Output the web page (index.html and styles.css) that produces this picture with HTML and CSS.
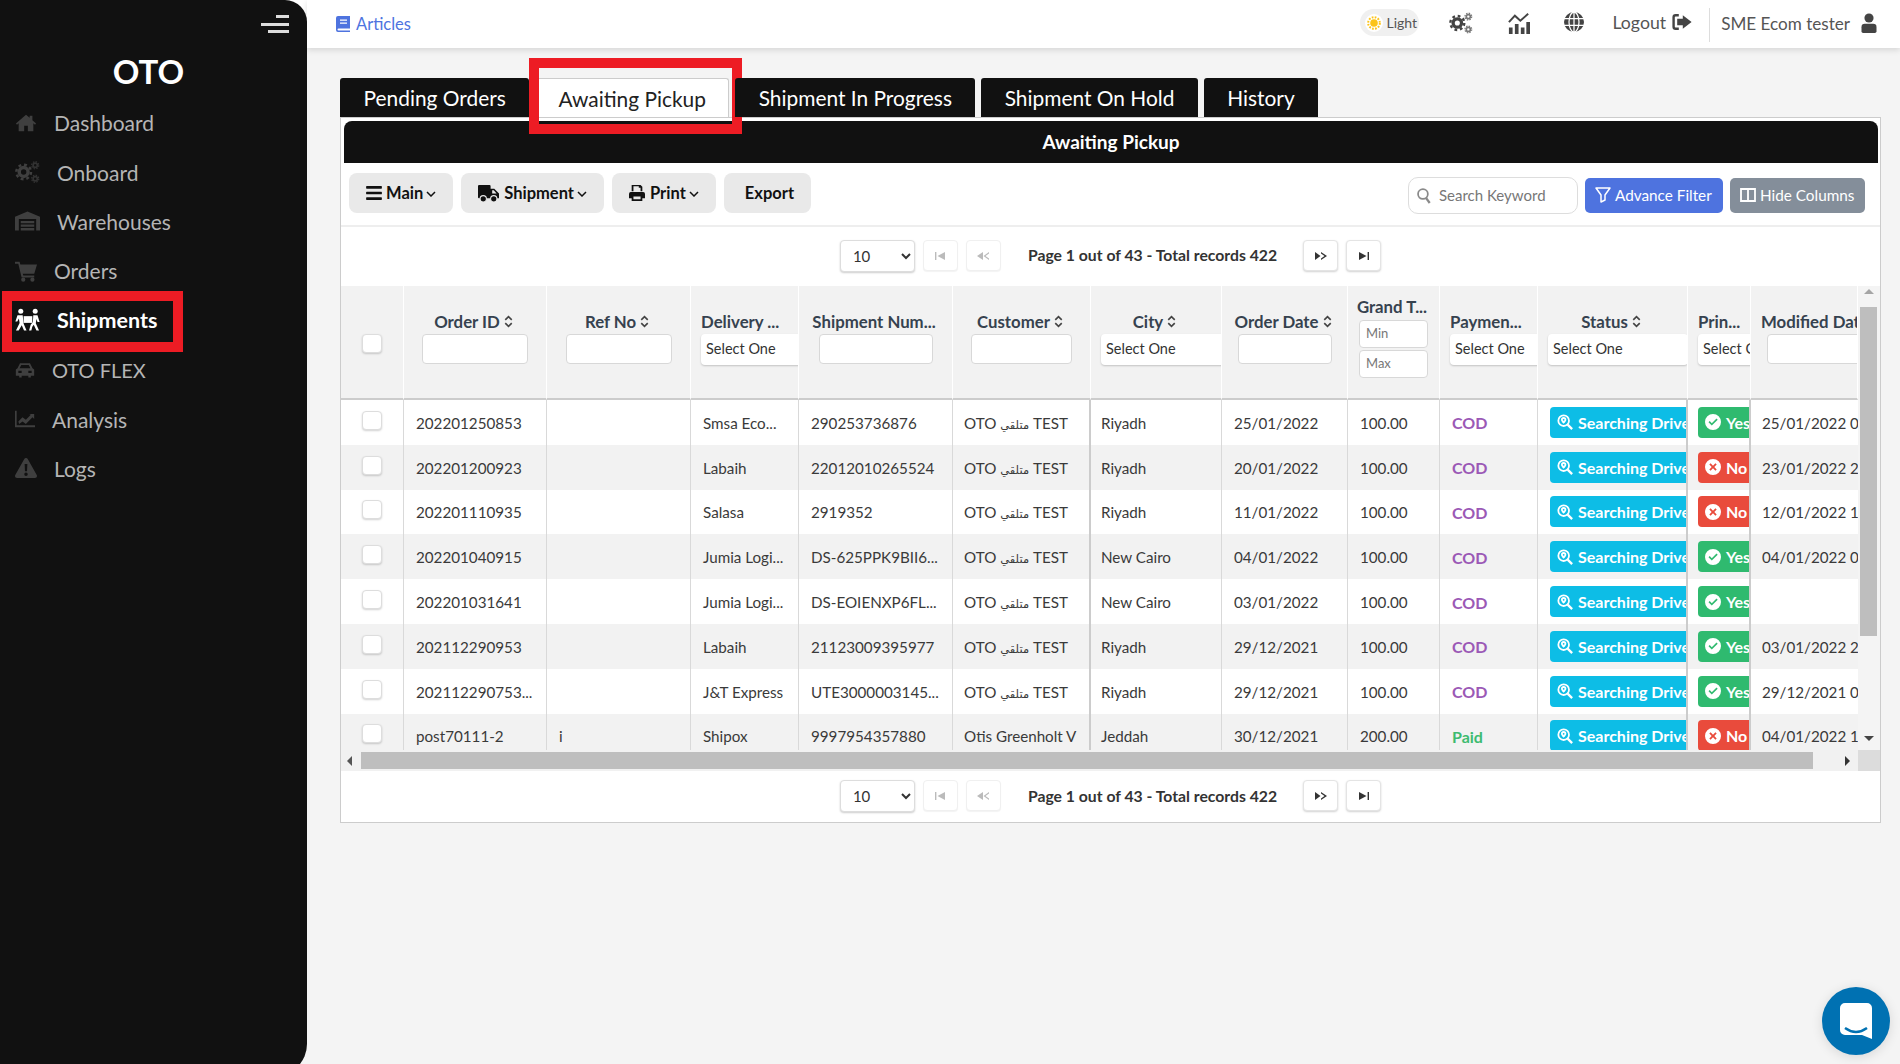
FILE: index.html
```html
<!DOCTYPE html>
<html lang="en">
<head>
<meta charset="utf-8">
<title>Awaiting Pickup</title>
<link rel="stylesheet" href="styles.css">
</head>
<body>
<svg class="defs" aria-hidden="true">
  <symbol id="i-home" viewBox="0 0 24 24"><path d="M12 3 1 12.5l1.2 1.4L4 12.4V21h6v-6h4v6h6v-8.6l1.8 1.5 1.2-1.4L19 9V4h-3v2.4z"/></symbol>
  <symbol id="i-gears" viewBox="0 0 26 24"><circle cx="9" cy="12" r="4.6" fill="none" stroke="currentColor" stroke-width="3.6"/><circle cx="9" cy="12" r="7.6" fill="none" stroke="currentColor" stroke-width="2.6" stroke-dasharray="3 3"/><g opacity=".72"><circle cx="21" cy="5" r="2.2" fill="none" stroke="currentColor" stroke-width="1.8"/><circle cx="21" cy="5" r="3.7" fill="none" stroke="currentColor" stroke-width="1.3" stroke-dasharray="1.6 1.3"/><circle cx="21" cy="19" r="2.2" fill="none" stroke="currentColor" stroke-width="1.8"/><circle cx="21" cy="19" r="3.7" fill="none" stroke="currentColor" stroke-width="1.3" stroke-dasharray="1.6 1.3"/></g></symbol>
  <symbol id="i-warehouse" viewBox="0 0 26 24"><path d="M0 7.5 13 2l13 5.5V22h-4V10H4v12H0z"/><path d="M6 12h14v2.4H6zM6 15.6h14V18H6zM6 19.2h14V22H6z"/></symbol>
  <symbol id="i-cart" viewBox="0 0 24 24"><path d="M0 2h5l.8 3H24l-3 10H8.5l.5 2h12v2.2H7.2L3.6 4.2H0z"/><circle cx="9" cy="21.5" r="2.3"/><circle cx="19" cy="21.5" r="2.3"/></symbol>
  <symbol id="i-people" viewBox="0 0 26 24"><circle cx="6" cy="3" r="2.6"/><circle cx="21" cy="3" r="2.6"/><path d="M9 8h9v7H9z"/><path d="M2.6 7h5.4l1 9 3 7h-2.6L7 17.5 3.8 23H1l3.8-8L4 10.4l-1.6 3.2H.4z"/><path d="M19 7h4.4l2.2 7h-2.2l-1-3-.8 4.4 3.4 7.6h-2.7L19.500 17l-1.500 2-1 4h-2.400l1.700-6 2.300-3z"/></symbol>
  <symbol id="i-car" viewBox="0 0 24 18"><path d="M6 1h12l3 6 2 1.500V16h-4v2h-3v-2H8v2H5v-2H1V8.500L3 7zm1.500 2L5.500 7h13l-2-4zM4 10v2.500h4V10zm12 0v2.500h4V10z" fill-rule="evenodd"/></symbol>
  <symbol id="i-area" viewBox="0 0 24 20"><path d="M0 0h2v17.500h22V20H0z"/><path d="m4 13 5-5 4 3 6-6-2-1h6v6l-2-2-8 8-4-3-4 3z"/></symbol>
  <symbol id="i-warn" viewBox="0 0 24 22"><path d="M12 0c.8 0 1.500.4 1.900 1.100l9.800 17.600c.8 1.500-.2 3.300-1.900 3.300H2.200C.5 22-.5 20.200.3 18.700L10.100 1.100C10.500.4 11.200 0 12 0zm-1.500 6.500.4 8h2.200l.4-8zM12 16a1.900 1.900 0 1 0 0 3.800 1.900 1.900 0 0 0 0-3.800z" fill-rule="evenodd"/></symbol>
  <symbol id="i-book" viewBox="0 0 14 16"><path d="M2 0h12v12.500H2.500a1 1 0 0 0 0 2H14V16H2a2 2 0 0 1-2-2V2a2 2 0 0 1 2-2zm2 3.500v1.300h7V3.500zm0 3v1.300h7V6.500z" fill-rule="evenodd"/></symbol>
  <symbol id="i-sun" viewBox="0 0 24 24"><circle cx="12" cy="12" r="6.500"/><circle cx="12" cy="12" r="10" fill="none" stroke="currentColor" stroke-width="3.400" stroke-dasharray="3 2.240"/></symbol>
  <symbol id="i-chart" viewBox="0 0 24 24"><path d="M1 17h4v7H1zM7.500 13h4v11h-4zM14 17h4v7h-4zM20 11h4v13h-4z"/><path d="m1 11 6.500-7 6 5.500L22 2" fill="none" stroke="currentColor" stroke-width="2.200"/></symbol>
  <symbol id="i-globe" viewBox="0 0 24 24"><circle cx="12" cy="12" r="12"/><g fill="none" stroke="#fff" stroke-width="1.500"><path d="M0 8h24M0 16h24M12 0v24"/><ellipse cx="12" cy="12" rx="6" ry="12"/></g></symbol>
  <symbol id="i-logout" viewBox="0 0 24 20"><path d="M8 0H4a4 4 0 0 0-4 4v12a4 4 0 0 0 4 4h4v-3H4a1 1 0 0 1-1-1V4a1 1 0 0 1 1-1h4z"/><path d="M13 1.500 24 10 13 18.500V14H6V6h7z"/></symbol>
  <symbol id="i-user" viewBox="0 0 18 24"><circle cx="9" cy="6" r="5.500"/><path d="M4 13h10a4 4 0 0 1 4 4v5a2 2 0 0 1-2 2H2a2 2 0 0 1-2-2v-5a4 4 0 0 1 4-4z"/></symbol>
  <symbol id="i-bars" viewBox="0 0 448 512"><path d="M16 132h416c8.837 0 16-7.163 16-16V76c0-8.837-7.163-16-16-16H16C7.163 60 0 67.163 0 76v40c0 8.837 7.163 16 16 16zm0 160h416c8.837 0 16-7.163 16-16v-40c0-8.837-7.163-16-16-16H16c-8.837 0-16 7.163-16 16v40c0 8.837 7.163 16 16 16zm0 160h416c8.837 0 16-7.163 16-16v-40c0-8.837-7.163-16-16-16H16c-8.837 0-16 7.163-16 16v40c0 8.837 7.163 16 16 16z"/></symbol>
  <symbol id="i-truck" viewBox="0 0 20 16"><path d="M0 1a1 1 0 0 1 1-1h10a1 1 0 0 1 1 1v2.500h3.500L20 8v4.500H1a1 1 0 0 1-1-1zm13.500 3.800V8h4.200l-2.700-3.200z" fill-rule="evenodd"/><circle cx="5" cy="13" r="3" stroke="#e9e9e9"/><circle cx="15" cy="13" r="3" stroke="#e9e9e9"/></symbol>
  <symbol id="i-print" viewBox="0 0 18 18"><path d="M3 0h10l2 2v5h-2V3h-2V1.500H5V7H3zM2 8h14a2 2 0 0 1 2 2v5h-3v3H3v-3H0v-5a2 2 0 0 1 2-2zm3 5v3h8v-3z" fill-rule="evenodd"/></symbol>
  <symbol id="i-chev" viewBox="0 0 10 6"><path d="m1 1 4 4 4-4" fill="none" stroke="currentColor" stroke-width="1.500"/></symbol>
  <symbol id="i-search" viewBox="0 0 16 18"><circle cx="6.800" cy="6.800" r="5.600" fill="none" stroke="currentColor" stroke-width="2"/><path d="m10.500 11.500 4 5.500" stroke="currentColor" stroke-width="2.600"/></symbol>
  <symbol id="i-filter" viewBox="0 0 16 16"><path d="M1 1h14L10 8v5l-4 2V8z" fill="none" stroke="currentColor" stroke-width="1.500" stroke-linejoin="round"/></symbol>
  <symbol id="i-columns" viewBox="0 0 16 16"><path d="M1 2h14v12H1zM8 2v12" fill="none" stroke="currentColor" stroke-width="1.800"/></symbol>
  <symbol id="i-sort" viewBox="0 0 8 12"><path d="m1 4.500 3-3 3 3M1 7.500l3 3 3-3" fill="none" stroke="currentColor" stroke-width="1.500"/></symbol>
  <symbol id="i-find" viewBox="0 0 18 18"><circle cx="7.500" cy="7.500" r="6" fill="none" stroke="currentColor" stroke-width="2"/><path d="m12 12 5 5" stroke="currentColor" stroke-width="2.600"/><path d="M7.500 3.500a3 3 0 0 1 3 3c0 2-3 4.500-3 4.500s-3-2.500-3-4.500a3 3 0 0 1 3-3zm0 2a1 1 0 1 0 0 2 1 1 0 0 0 0-2z" fill-rule="evenodd"/></symbol>
  <symbol id="i-yes" viewBox="0 0 16 16"><path d="M8 0a8 8 0 1 1 0 16A8 8 0 0 1 8 0zm3.500 4.500L6.800 9.200 4.700 7.100 3.500 8.300l3.300 3.300 5.900-5.900z" fill-rule="evenodd"/></symbol>
  <symbol id="i-no" viewBox="0 0 16 16"><path d="M8 0a8 8 0 1 1 0 16A8 8 0 0 1 8 0zM5.600 4.300 4.300 5.600 6.700 8l-2.400 2.400 1.300 1.300L8 9.300l2.400 2.400 1.300-1.300L9.300 8l2.400-2.400-1.300-1.300L8 6.700z" fill-rule="evenodd"/></symbol>
  <symbol id="i-first" viewBox="0 0 12 8"><path d="M1 0h1.400v8H1zM11 0v8L3.500 4z"/></symbol>
  <symbol id="i-prev" viewBox="0 0 12 8"><path d="M6 0v8L0 4zM12 0v1.500L8.500 4 12 6.500V8L6.500 4z"/></symbol>
  <symbol id="i-next" viewBox="0 0 12 8"><path d="M0 0v8l5.500-4zM6 0v1.500L9.500 4 6 6.500V8l6-4z"/></symbol>
  <symbol id="i-last" viewBox="0 0 12 8"><path d="M11 0H9.600v8H11zM1 0v8l7.500-4z"/></symbol>
  <symbol id="i-chat" viewBox="0 0 32 36"><path d="M5 0h22a5 5 0 0 1 5 5v31l-10-4H5a5 5 0 0 1-5-5V5a5 5 0 0 1 5-5z"/><path d="M5 25c7 5 15 5 22 0" fill="none" stroke="#0071b2" stroke-width="2.400"/></symbol>
</svg>

<aside class="sidebar">
  <div class="toggle"><span class="bar bar-s"></span><span class="bar bar-l"></span><span class="bar bar-m"></span></div>
  <div class="brand">OTO</div>
  <nav class="menu">
    <a class="item"><span class="ic ic-m"><svg class="w22"><use href="#i-home"/></svg></span>Dashboard</a>
    <a class="item"><span class="ic ic-l"><svg class="w25"><use href="#i-gears"/></svg></span>Onboard</a>
    <a class="item"><span class="ic ic-l"><svg class="w25"><use href="#i-warehouse"/></svg></span>Warehouses</a>
    <a class="item"><span class="ic ic-m"><svg class="w22"><use href="#i-cart"/></svg></span>Orders</a>
    <a class="item item-on"><span class="ic ic-x"><svg class="w25"><use href="#i-people"/></svg></span>Shipments</a>
    <a class="item item-caps"><span class="ic ic-s"><svg class="w20"><use href="#i-car"/></svg></span>OTO FLEX</a>
    <a class="item"><span class="ic ic-s"><svg class="w20"><use href="#i-area"/></svg></span>Analysis</a>
    <a class="item"><span class="ic ic-m"><svg class="w22"><use href="#i-warn"/></svg></span>Logs</a>
  </nav>
  <div class="mark mark-nav"></div>
</aside>

<div class="main">
  <header class="topbar">
    <a class="articles"><svg class="ico-book"><use href="#i-book"/></svg>Articles</a>
    <div class="top-right">
      <span class="mode"><span class="mode-dot"><svg><use href="#i-sun"/></svg></span>Light</span>
      <svg class="top-ic gears"><use href="#i-gears"/></svg>
      <svg class="top-ic chart"><use href="#i-chart"/></svg>
      <svg class="top-ic globe"><use href="#i-globe"/></svg>
      <a class="logout">Logout<svg><use href="#i-logout"/></svg></a>
      <span class="who">SME Ecom tester<svg><use href="#i-user"/></svg></span>
    </div>
  </header>

  <section class="content">
    <div class="tabs">
      <a class="tab">Pending Orders</a>
      <a class="tab tab-on">Awaiting Pickup<span class="mark mark-tab"></span></a>
      <a class="tab">Shipment In Progress</a>
      <a class="tab">Shipment On Hold</a>
      <a class="tab">History</a>
    </div>

    <div class="panel">
      <h2 class="title">Awaiting Pickup</h2>
      <div class="toolbar">
        <div class="tools">
          <button class="tool"><svg class="t-bars"><use href="#i-bars"/></svg>Main<svg class="chev"><use href="#i-chev"/></svg></button>
          <button class="tool"><svg class="t-truck"><use href="#i-truck"/></svg>Shipment<svg class="chev"><use href="#i-chev"/></svg></button>
          <button class="tool"><svg class="t-print"><use href="#i-print"/></svg>Print<svg class="chev"><use href="#i-chev"/></svg></button>
          <button class="tool tool-plain">Export</button>
        </div>
        <div class="finds">
          <label class="search"><svg><use href="#i-search"/></svg><input placeholder="Search Keyword"></label>
          <button class="act act-blue"><svg><use href="#i-filter"/></svg>Advance Filter</button>
          <button class="act act-grey"><svg><use href="#i-columns"/></svg>Hide Columns</button>
        </div>
      </div>

      <div class="pager pager-top">
        <select class="size"><option>10</option></select>
        <button class="pg pg-off"><svg><use href="#i-first"/></svg></button>
        <button class="pg pg-off"><svg><use href="#i-prev"/></svg></button>
        <span class="pg-text">Page 1 out of 43 - Total records 422</span>
        <button class="pg"><svg><use href="#i-next"/></svg></button>
        <button class="pg"><svg><use href="#i-last"/></svg></button>
      </div>

      <div class="grid">
        <div class="clip">
          <table class="data">
            <colgroup>
              <col class="c1"><col class="c2"><col class="c3"><col class="c4"><col class="c5"><col class="c6"><col class="c7"><col class="c8"><col class="c9"><col class="c10"><col class="c11"><col class="c12"><col class="c13">
            </colgroup>
            <thead>
              <tr>
                <th><span class="box box-head"></span></th>
                <th><div class="lbl">Order ID<svg class="sort"><use href="#i-sort"/></svg></div><div class="in w105"></div></th>
                <th><div class="lbl">Ref No<svg class="sort"><use href="#i-sort"/></svg></div><div class="in w105"></div></th>
                <th class="left"><div class="lbl">Delivery ...</div><div class="pick">Select One</div></th>
                <th><div class="lbl">Shipment Num...</div><div class="in w114"></div></th>
                <th><div class="lbl">Customer<svg class="sort"><use href="#i-sort"/></svg></div><div class="in w101"></div></th>
                <th class="left"><div class="lbl lbl-mid">City<svg class="sort"><use href="#i-sort"/></svg></div><div class="pick">Select One</div></th>
                <th><div class="lbl">Order Date<svg class="sort"><use href="#i-sort"/></svg></div><div class="in w94"></div></th>
                <th class="tall"><div class="lbl">Grand T...</div><div class="in range range-first">Min</div><div class="in range">Max</div></th>
                <th class="left"><div class="lbl">Paymen...</div><div class="pick">Select One</div></th>
                <th class="left"><div class="lbl lbl-mid">Status<svg class="sort"><use href="#i-sort"/></svg></div><div class="pick">Select One</div></th>
                <th class="left"><div class="lbl">Prin...</div><div class="pick">Select One</div></th>
                <th class="left"><div class="lbl">Modified Date</div><div class="in w105"></div></th>
              </tr>
            </thead>
            <tbody>
              <tr><td><span class="box"></span></td><td>202201250853</td><td></td><td>Smsa Eco...</td><td>290253736876</td><td class="cust">OTO <span class="ar">متلقي</span> TEST</td><td class="city">Riyadh</td><td>25/01/2022</td><td>100.00</td><td class="cod">COD</td><td class="st"><span class="badge b-find"><svg><use href="#i-find"/></svg>Searching Driver</span></td><td class="pr"><span class="badge b-yes"><svg><use href="#i-yes"/></svg>Yes</span></td><td>25/01/2022 0...</td></tr>
              <tr><td><span class="box"></span></td><td>202201200923</td><td></td><td>Labaih</td><td>22012010265524</td><td class="cust">OTO <span class="ar">متلقي</span> TEST</td><td class="city">Riyadh</td><td>20/01/2022</td><td>100.00</td><td class="cod">COD</td><td class="st"><span class="badge b-find"><svg><use href="#i-find"/></svg>Searching Driver</span></td><td class="pr"><span class="badge b-no"><svg><use href="#i-no"/></svg>No</span></td><td>23/01/2022 2...</td></tr>
              <tr><td><span class="box"></span></td><td>202201110935</td><td></td><td>Salasa</td><td>2919352</td><td class="cust">OTO <span class="ar">متلقي</span> TEST</td><td class="city">Riyadh</td><td>11/01/2022</td><td>100.00</td><td class="cod">COD</td><td class="st"><span class="badge b-find"><svg><use href="#i-find"/></svg>Searching Driver</span></td><td class="pr"><span class="badge b-no"><svg><use href="#i-no"/></svg>No</span></td><td>12/01/2022 1...</td></tr>
              <tr><td><span class="box"></span></td><td>202201040915</td><td></td><td>Jumia Logi...</td><td>DS-625PPK9BII6...</td><td class="cust">OTO <span class="ar">متلقي</span> TEST</td><td class="city">New Cairo</td><td>04/01/2022</td><td>100.00</td><td class="cod">COD</td><td class="st"><span class="badge b-find"><svg><use href="#i-find"/></svg>Searching Driver</span></td><td class="pr"><span class="badge b-yes"><svg><use href="#i-yes"/></svg>Yes</span></td><td>04/01/2022 0...</td></tr>
              <tr><td><span class="box"></span></td><td>202201031641</td><td></td><td>Jumia Logi...</td><td>DS-EOIENXP6FL...</td><td class="cust">OTO <span class="ar">متلقي</span> TEST</td><td class="city">New Cairo</td><td>03/01/2022</td><td>100.00</td><td class="cod">COD</td><td class="st"><span class="badge b-find"><svg><use href="#i-find"/></svg>Searching Driver</span></td><td class="pr"><span class="badge b-yes"><svg><use href="#i-yes"/></svg>Yes</span></td><td></td></tr>
              <tr><td><span class="box"></span></td><td>202112290953</td><td></td><td>Labaih</td><td>21123009395977</td><td class="cust">OTO <span class="ar">متلقي</span> TEST</td><td class="city">Riyadh</td><td>29/12/2021</td><td>100.00</td><td class="cod">COD</td><td class="st"><span class="badge b-find"><svg><use href="#i-find"/></svg>Searching Driver</span></td><td class="pr"><span class="badge b-yes"><svg><use href="#i-yes"/></svg>Yes</span></td><td>03/01/2022 2...</td></tr>
              <tr><td><span class="box"></span></td><td>202112290753...</td><td></td><td>J&amp;T Express</td><td>UTE3000003145...</td><td class="cust">OTO <span class="ar">متلقي</span> TEST</td><td class="city">Riyadh</td><td>29/12/2021</td><td>100.00</td><td class="cod">COD</td><td class="st"><span class="badge b-find"><svg><use href="#i-find"/></svg>Searching Driver</span></td><td class="pr"><span class="badge b-yes"><svg><use href="#i-yes"/></svg>Yes</span></td><td>29/12/2021 0...</td></tr>
              <tr><td><span class="box"></span></td><td>post70111-2</td><td>i</td><td>Shipox</td><td>9997954357880</td><td class="cust">Otis Greenholt V</td><td class="city">Jeddah</td><td>30/12/2021</td><td>200.00</td><td class="paid">Paid</td><td class="st"><span class="badge b-find"><svg><use href="#i-find"/></svg>Searching Driver</span></td><td class="pr"><span class="badge b-no"><svg><use href="#i-no"/></svg>No</span></td><td>04/01/2022 1...</td></tr>
            </tbody>
          </table>
        </div>
        <div class="vbar"><span class="arrow a-up"></span><span class="vthumb"></span><span class="arrow a-down"></span></div>
        <div class="hbar"><span class="arrow a-left"></span><span class="hthumb"></span><span class="arrow a-right"></span></div>
        <div class="corner"></div>
      </div>

      <div class="pager pager-bottom">
        <select class="size"><option>10</option></select>
        <button class="pg pg-off"><svg><use href="#i-first"/></svg></button>
        <button class="pg pg-off"><svg><use href="#i-prev"/></svg></button>
        <span class="pg-text">Page 1 out of 43 - Total records 422</span>
        <button class="pg"><svg><use href="#i-next"/></svg></button>
        <button class="pg"><svg><use href="#i-last"/></svg></button>
      </div>
    </div>
  </section>
</div>

<button class="chat" aria-label="Chat"><svg><use href="#i-chat"/></svg></button>
</body>
</html>
```

FILE: styles.css
```css
* { box-sizing: border-box; }
html, body { height: 100%; }
body {
  margin: 0;
  display: flex;
  align-items: flex-start;
  height: 1064px;
  overflow: hidden;
  font-family: Lato, "Noto Sans", "DejaVu Sans", sans-serif;
  color: #333;
  background: linear-gradient(#fff 48px, #f4f4f4 48px);
}
svg { fill: currentColor; display: block; flex: none; }
button, input, select { font-family: inherit; }
.defs { position: absolute; width: 0; height: 0; }

/* sidebar */
.sidebar {
  position: relative;
  flex: 0 0 307px;
  height: 1076px;
  background: #111;
  border-radius: 0 22px 32px 0;
}
.toggle {
  display: flex;
  flex-direction: column;
  align-items: flex-end;
  gap: 4.5px;
  padding: 15px 18px 0 0;
}
.bar { display: block; height: 3px; background: #ddd; }
.bar-s { width: 13px; }
.bar-l { width: 28px; }
.bar-m { width: 21px; }
.brand {
  margin-top: 18px;
  padding-right: 10px;
  text-align: center;
  color: #fff;
  font-size: 33px;
  font-weight: 700;
  line-height: 40px;
}
.menu { margin-top: 7px; }
.item {
  display: flex;
  align-items: center;
  height: 49.4px;
  padding-left: 15px;
  font-size: 21px;
  color: #b5b5b5;
}
.item-on { color: #fff; font-weight: 700; font-size: 21.500px; }
.item-caps { font-size: 20px; }
.ic { display: block; color: #3f3f3f; }
.item-on .ic { color: #fff; }
.ic-s { width: 37px; }
.ic-m { width: 39px; }
.ic-l { width: 42px; }
.ic-x { width: 42px; }
.w20 { width: 20px; height: 20px; }
.w22 { width: 22px; height: 22px; }
.w25 { width: 25px; height: 24px; }
.mark { position: absolute; border: 10px solid #ed1c24; pointer-events: none; }
.mark-nav { left: 2px; top: 291px; width: 181px; height: 61px; }

/* header */
.main { flex: 1; min-width: 0; }
.topbar {
  display: flex;
  align-items: flex-start;
  justify-content: space-between;
  height: 48px;
  padding: 0 22px 0 29px;
  background: #fff;
  box-shadow: 0 2px 6px rgba(0, 0, 0, .13);
}
.articles { display: flex; align-items: center; gap: 6px; height: 48px; font-size: 16.500px; color: #4e73df; }
.ico-book { width: 14px; height: 16px; }
.top-right { display: flex; align-items: flex-start; color: #555; }
.mode {
  display: flex;
  align-items: center;
  gap: 3px;
  width: 59px;
  height: 27px;
  margin-top: 9px;
  padding-left: 5px;
  border-radius: 14px;
  background: #f0f0f0;
  font-size: 14px;
}
.mode-dot { display: block; padding: 2px; border-radius: 50%; background: #fff; color: #fcc419; }
.mode-dot svg { width: 14px; height: 14px; }
.top-ic { color: #444; margin-top: 12px; }
.gears { width: 26px; height: 22px; margin-left: 29px; }
.chart { width: 24px; height: 22px; margin-left: 33px; }
.globe { width: 20px; height: 20px; margin-left: 33px; }
.logout { display: flex; align-items: center; gap: 6px; height: 24px; margin: 10px 0 0 28px; font-size: 17.700px; }
.logout svg { width: 20px; height: 16px; color: #444; }
.who {
  display: flex;
  align-items: center;
  gap: 10px;
  height: 34px;
  margin: 8px 0 0 17px;
  padding: 0 0 4px 11px;
  border-left: 1px solid #ddd;
  font-size: 17.100px;
}
.who svg { width: 18px; height: 20px; color: #444; }

/* tabs and panel */
.content { padding: 30px 19px 0 33px; }
.tabs { display: flex; gap: 5.750px; }
.tab {
  position: relative;
  display: flex;
  align-items: center;
  height: 39px;
  padding: 0 23.500px;
  border-radius: 3px 3px 0 0;
  background: #111;
  color: #fff;
  font-size: 20.900px;
}
.tab-on { padding: 0 22.500px; background: #fff; color: #222; border: 1px solid #ccc; border-bottom: 0; }
.mark-tab { left: -7px; top: -21px; width: 213px; height: 76px; }
.panel { border: 1px solid #ccc; background: #fff; }
.title {
  display: flex;
  align-items: center;
  justify-content: center;
  height: 42px;
  margin: 3px 2px 0 3px;
  padding-bottom: 2px;
  border-radius: 8px 8px 0 0;
  background: #111;
  color: #fff;
  font-size: 19px;
  font-weight: 700;
}
.toolbar {
  display: flex;
  align-items: flex-start;
  justify-content: space-between;
  height: 64px;
  padding: 10px 15px 0 8px;
  border-bottom: 2px solid #eee;
}
.tools { display: flex; gap: 8px; }
.tool {
  display: flex;
  align-items: center;
  height: 40px;
  padding: 0 17px;
  border: 0;
  border-radius: 8px;
  background: #e9e9e9;
  color: #111;
  font-size: 16.500px;
  font-weight: 700;
}
.tool-plain { padding: 0 17px 0 21px; }
.t-bars { width: 16px; height: 18px; margin-right: 4px; }
.t-truck { width: 21px; height: 17px; margin-right: 5px; }
.t-print { width: 16px; height: 16px; margin-right: 5px; }
.chev { width: 10px; height: 6px; margin: 1px 0 0 3px; }
.finds { display: flex; align-items: flex-start; gap: 7px; }
.search {
  display: flex;
  align-items: center;
  gap: 6px;
  width: 170px;
  height: 37px;
  margin-top: 4px;
  padding-left: 8px;
  border: 1px solid #ddd;
  border-radius: 10px;
  background: #fff;
  color: #8a8a8a;
}
.search svg { width: 14px; height: 16px; }
.search input {
  width: 130px;
  padding-bottom: 3px;
  border: 0;
  outline: 0;
  background: none;
  font-size: 15px;
}
.search input::placeholder { color: #777; opacity: 1; }
.act {
  display: flex;
  align-items: center;
  gap: 4px;
  height: 35px;
  margin-top: 5px;
  padding: 0 10px 2px;
  border: 0;
  border-radius: 5px;
  color: #fff;
  font-size: 15.300px;
}
.act svg { width: 16px; height: 16px; }
.act-blue { width: 138px; background: #4e73df; }
.act-grey { width: 135px; background: #848e9a; }

/* pagination */
.pager { display: flex; align-items: center; justify-content: center; }
.pager-top { height: 59px; padding-bottom: 2px; }
.pager-bottom { height: 51px; padding-bottom: 2px; }
.size {
  width: 75px;
  height: 32px;
  padding-left: 8px;
  border: 1px solid #ddd;
  border-radius: 4px;
  background: #fff;
  box-shadow: 0 1px 2px rgba(0, 0, 0, .2);
  color: #333;
  font-size: 15px;
}
.pg {
  display: flex;
  align-items: center;
  justify-content: center;
  width: 35px;
  height: 31px;
  margin-left: 8px;
  padding: 0;
  border: 1px solid #e4e4e4;
  border-radius: 4px;
  background: #fff;
  box-shadow: 0 1px 2px rgba(0, 0, 0, .18);
  color: #333;
}
.pg svg { width: 12px; height: 8px; }
.pg-off { border-color: #f0f0f0; box-shadow: 0 1px 1px rgba(0, 0, 0, .05); color: #bbb; }
.pg-text { margin: 0 18px 0 27px; font-size: 15.750px; font-weight: 700; color: #333; white-space: nowrap; }
.pager-top .pg-text { margin-bottom: 3px; }

/* table */
.grid {
  display: grid;
  grid-template-columns: 1517px 22px;
  grid-template-rows: 464px 21px;
}
.clip { overflow: hidden; }
.data { width: 1517px; table-layout: fixed; border-collapse: separate; border-spacing: 0; }
.c1 { width: 63px; } .c2 { width: 143px; } .c3 { width: 144px; } .c4 { width: 108px; }
.c5 { width: 154px; } .c6 { width: 138px; } .c7 { width: 131px; } .c8 { width: 126px; }
.c9 { width: 92px; } .c10 { width: 98px; } .c11 { width: 150px; } .c12 { width: 63px; } .c13 { width: 107px; }
th {
  height: 114px;
  padding: 25px 0 0;
  overflow: hidden;
  vertical-align: top;
  background: #f2f2f2;
  border-right: 1px solid #fff;
  border-bottom: 2px solid #ccc;
  color: #36424f;
  font-size: 16.800px;
  font-weight: 700;
  white-space: nowrap;
}
th:first-child { padding-top: 48px; }
th.tall { padding-top: 10px; }
th.left { padding-left: 10px; text-align: left; }
.lbl { display: flex; align-items: center; justify-content: center; gap: 4px; height: 20px; padding-right: 3px; }
.left .lbl { justify-content: flex-start; padding-right: 0; }
.left .lbl-mid { justify-content: center; padding-right: 13px; }
.sort { width: 9px; height: 13px; color: #444; }
.in {
  display: block;
  height: 30px;
  margin: 3px auto 0;
  padding: 4px 6px;
  border: 1px solid #d8d8d8;
  border-radius: 4px;
  background: #fff;
  color: #777;
  font-size: 13px;
  font-weight: 400;
  text-align: left;
}
.left .in { margin: 3px 0 0 6px; }
.w105 { width: 106px; }
.w114 { width: 114px; }
.w101 { width: 101px; }
.w94 { width: 94px; }
.range { width: 69px; height: 28px; margin-top: 2px; }
.range-first { margin-top: 4px; }
.pick {
  width: 140px;
  height: 31px;
  margin-top: 3px;
  padding: 6px 5px 0;
  border-radius: 4px;
  background: #fff;
  box-shadow: 0 1px 2px rgba(0, 0, 0, .2);
  color: #333;
  font-size: 14.500px;
  font-weight: 400;
}
.box {
  display: block;
  width: 20px;
  height: 19px;
  margin: 0 auto;
  border: 1px solid #ddd;
  border-radius: 4px;
  background: #fff;
  box-shadow: 0 1px 2px rgba(0, 0, 0, .18);
}
td {
  height: 44.800px;
  padding: 1px 0 0 12px;
  overflow: hidden;
  border-right: 1px solid #d9d9d9;
  font-size: 15.200px;
  color: #3a3a3a;
  white-space: nowrap;
}
td:first-child { padding: 0 0 4px; }
td:last-child { border-right: 0; padding-left: 11px; }
tbody tr:nth-child(even) td { background: #f2f2f2; }
.cust { padding-left: 11px; border-right: 2px solid #ccc; }
.ar { font-size: 11.500px; }
.city { padding-left: 10px; }
.cod { color: #9b59b6; font-weight: 700; font-size: 16px; }
.paid { color: #3dbb6f; font-weight: 700; font-size: 16px; }
.st { padding: 0 0 0 12px; border-right: 2px solid #ccc; }
.pr { padding: 0 0 0 10px; border-right: 2px solid #ccc; }
.badge {
  display: flex;
  align-items: center;
  gap: 5px;
  height: 31px;
  padding-left: 7px;
  border-radius: 4px;
  color: #fff;
  font-size: 16px;
  font-weight: 700;
}
.badge svg { width: 16px; height: 16px; }
.b-find { width: 170px; background: #0dbde6; }
.b-yes { width: 70px; background: #2fba6f; }
.b-no { width: 70px; background: #e94b3c; }
.vbar { position: relative; background: #f4f4f4; }
.vthumb { position: absolute; left: 2px; top: 21px; width: 17px; height: 329px; background: #bebebe; }
.hbar { position: relative; background: #f1f1f1; }
.hthumb { position: absolute; left: 20px; top: 2px; width: 1452px; height: 17px; background: #bebebe; }
.corner { background: #dcdcdc; }
.arrow { position: absolute; width: 0; height: 0; border: 5px solid transparent; }
.a-up { left: 6px; top: 3px; border-top: 0; border-bottom-color: #a5a5a5; }
.a-down { left: 6px; bottom: 9px; border-bottom: 0; border-top-color: #444; }
.a-left { left: 6px; top: 6px; border-left: 0; border-right-color: #555; }
.a-right { right: 8px; top: 6px; border-right: 0; border-left-color: #333; }

/* chat launcher */
.chat {
  position: absolute;
  left: 1822px;
  top: 987px;
  display: flex;
  align-items: center;
  justify-content: center;
  width: 68px;
  height: 68px;
  padding: 0;
  border: 0;
  border-radius: 50%;
  background: #0071b2;
  box-shadow: 0 2px 12px rgba(0, 0, 0, .12);
  color: #fff;
}
.chat svg { width: 32px; height: 36px; }
```
